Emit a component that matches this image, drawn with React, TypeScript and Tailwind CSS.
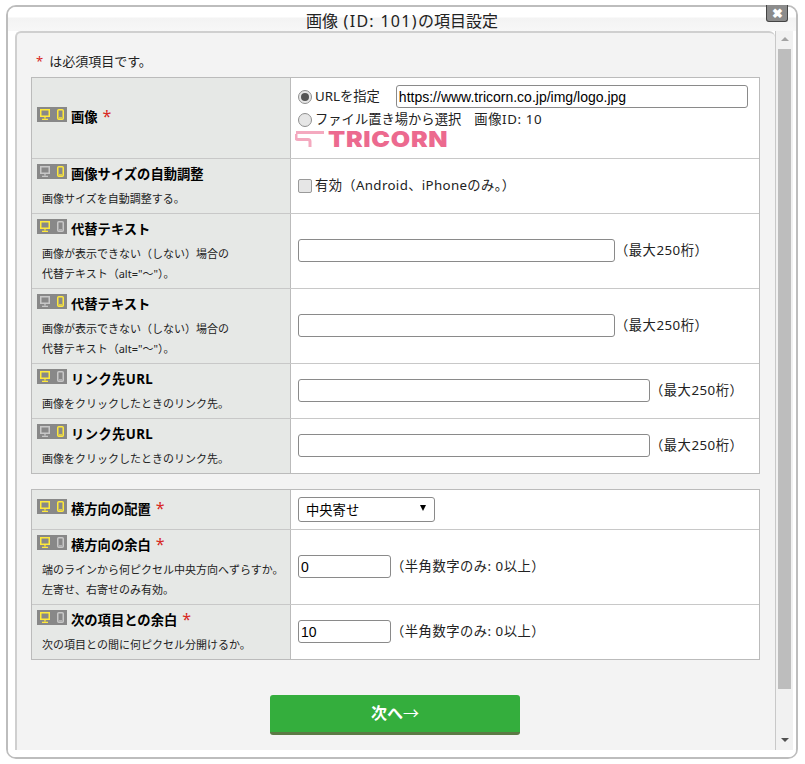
import type { ReactNode } from "react"

const font = "font-['Noto_Sans','Noto_Sans_CJK_JP',sans-serif]"

function Icons({ pc, sp }: { pc: boolean; sp: boolean }) {
  const a = pc ? "#ffe93b" : "#c8c8c8"
  const b = sp ? "#ffe93b" : "#c8c8c8"
  return (
    <span className="inline-flex h-[15px] w-[30px] shrink-0 items-center gap-[7px] bg-[#888888] pl-[3px]">
      <svg width="10" height="11" viewBox="0 0 10 11" fill="none">
        <rect x="0.75" y="0.75" width="8.5" height="6.5" stroke={a} strokeWidth="1.5" />
        <path d="M5 8v1.5M2 10.3h6" stroke={a} strokeWidth="1.3" />
      </svg>
      <svg width="7" height="11" viewBox="0 0 7 11" fill="none">
        <rect x="0.75" y="0.75" width="5.5" height="9.5" rx="1" stroke={b} strokeWidth="1.5" />
        <path d="M2 8.8h3" stroke={b} />
      </svg>
    </span>
  )
}

function Star() {
  return <span className="ml-[5px] text-[16px] leading-[16px] font-normal text-[#d8281e]">*</span>
}

function Row({
  pc, sp, title, req, desc, h, last, children,
}: {
  pc: boolean; sp: boolean; title: ReactNode; req?: boolean; desc?: string[]; h: string; last?: boolean; children: ReactNode
}) {
  return (
    <div className={`flex ${h} ${last ? "" : "border-b border-[#c8c8c8]"}`}>
      <div className={`flex w-[259px] shrink-0 flex-col border-r border-[#bbbbbb] bg-[#e6e8e6] pl-[5px] ${desc ? "justify-start pt-[5px]" : "justify-center pb-[2px]"}`}>
        <div className="flex items-start">
          <Icons pc={pc} sp={sp} />
          <span className="ml-1 mt-[1px] text-[13.3px] font-bold leading-[19px] text-black">
            {title}
            {req && <Star />}
          </span>
        </div>
        {desc && (
          <div className="mt-[5px] pl-[5px] text-[11px] leading-[20px] text-[#222222]">
            {desc.map(d => <div key={d}>{d}</div>)}
          </div>
        )}
      </div>
      <div className="flex min-w-0 flex-1 items-center bg-white pb-[1px] pl-[7px] text-[13.3px] text-[#222222]">{children}</div>
    </div>
  )
}

function TextBox({ w, value = "" }: { w: string; value?: string }) {
  return (
    <input
      readOnly
      value={value}
      className={`${w} h-[23px] rounded-[3px] border border-[#8a8a8a] bg-white px-[2px] font-['Liberation_Sans',sans-serif] text-[14px] text-black outline-none`}
    />
  )
}

function Note({ children }: { children: ReactNode }) {
  return <span className="text-[13.3px] tracking-[0.5px] text-[#222222]">{children}</span>
}

function Radio({ on }: { on?: boolean }) {
  return (
    <span className="flex h-[14px] w-[14px] shrink-0 items-center justify-center rounded-full border border-[#8f8f8f] bg-[#e6e6e6]">
      {on && <span className="h-[8px] w-[8px] rounded-full bg-[#555555]" />}
    </span>
  )
}

function Logo() {
  return (
    <div className="flex h-[17px] items-center">
      <svg width="30" height="17" viewBox="0 0 30 17" fill="none">
        <path d="M1 1.5h28" stroke="#f4a9bf" strokeWidth="3" />
        <path d="M1 3v3.5a2 2 0 0 0 2 2h10a2 2 0 0 1 2 2V16" stroke="#f4a9bf" strokeWidth="3" />
      </svg>
      <span className="ml-[3px] origin-left scale-x-[1.14] font-['Inter',sans-serif] text-[22px] leading-[17px] font-black tracking-[0.6px] text-[#ec6a8f]">
        TRICORN
      </span>
    </div>
  )
}

export default function App() {
  return (
    <div className={`h-[764px] w-[805px] overflow-hidden bg-white pl-[6px] pt-[5px] ${font}`}>
      <div className="relative flex h-[754px] w-[792px] flex-col rounded-[10px] border-2 border-[#bdbdbd] bg-white">
        <div className="h-[24px] shrink-0 rounded-t-[8px] bg-[linear-gradient(to_bottom,#ffffff_0,#ffffff_10px,#f3f3f3_11px,#f7f7f7_100%)] text-center text-[16px] leading-[29px] text-[#222222]">
          画像<span className="tracking-[1.3px]"> (ID: 101)</span>の項目設定
        </div>
        <div className="absolute right-[8px] top-[-2px] flex h-[17px] w-[22px] items-center justify-center rounded-b-[3px] border border-t-0 border-[#444444] bg-[#8c8c8c] text-[13px] leading-none font-bold text-white">
          ✖
        </div>

        <div className="flex min-h-0 flex-1 pl-[7px] pr-[3px]">
          <div className="flex-1 rounded-t-[6px] border-l-2 border-t-2 border-[#cfcfcf] bg-[#f3f3f3] pl-[14px]">
            <div className="h-[44px] pl-[5px] pt-[19px] text-[13px] leading-[18px] text-[#222222]">
              <span className="mr-[6px] text-[#d8281e]">*</span>は必須項目です。
            </div>

            <div className="w-[729px] border border-[#bbbbbb]">
              <Row pc sp title="画像" req h="h-[81px]">
                <div className="flex flex-col">
                  <div className="flex h-[23px] items-center">
                    <Radio on />
                    <span className="ml-[3px]">URLを指定</span>
                    <TextBox w="ml-[16px] w-[352px]" value="https://www.tricorn.co.jp/img/logo.jpg" />
                  </div>
                  <div className="flex h-[23px] items-center">
                    <Radio />
                    <span className="ml-[3px]">ファイル置き場から選択</span>
                    <span className="ml-[13px] tracking-[0.6px]">画像ID: 10</span>
                  </div>
                  <div className="-ml-[3px] mb-[2px]"><Logo /></div>
                </div>
              </Row>
              <Row pc={false} sp title="画像サイズの自動調整" desc={["画像サイズを自動調整する。"]} h="h-[55px]">
                <span className="flex h-[14px] w-[14px] shrink-0 rounded-[2px] border border-[#9a9a9a] bg-[#e6e6e6]" />
                <span className="ml-[3px] tracking-[0.35px]">有効（Android、iPhoneのみ。）</span>
              </Row>
              <Row pc sp={false} title="代替テキスト" desc={["画像が表示できない（しない）場合の", "代替テキスト（alt=\"～\"）。"]} h="h-[75px]">
                <TextBox w="w-[317px]" />
                <Note>（最大250桁）</Note>
              </Row>
              <Row pc={false} sp title="代替テキスト" desc={["画像が表示できない（しない）場合の", "代替テキスト（alt=\"～\"）。"]} h="h-[75px]">
                <TextBox w="w-[317px]" />
                <Note>（最大250桁）</Note>
              </Row>
              <Row pc sp={false} title={<span className="tracking-[0.4px]">リンク先URL</span>} desc={["画像をクリックしたときのリンク先。"]} h="h-[55px]">
                <TextBox w="w-[352px]" />
                <Note>（最大250桁）</Note>
              </Row>
              <Row pc={false} sp title={<span className="tracking-[0.4px]">リンク先URL</span>} desc={["画像をクリックしたときのリンク先。"]} h="h-[54px]" last>
                <TextBox w="w-[352px]" />
                <Note>（最大250桁）</Note>
              </Row>
            </div>

            <div className="mt-[15px] w-[729px] border border-[#bbbbbb]">
              <Row pc sp title="横方向の配置" req h="h-[40px]">
                <div className="relative flex h-[25px] w-[137px] items-center rounded-[3px] border border-[#8a8a8a] bg-white pl-[7px] pt-[3px] text-[13.3px] text-black">
                  中央寄せ
                  <span className="absolute right-[8px] top-[7px] h-0 w-0 border-x-[3.5px] border-t-[6px] border-x-transparent border-t-black" />
                </div>
              </Row>
              <Row pc sp={false} title="横方向の余白" req desc={["端のラインから何ピクセル中央方向へずらすか。", "左寄せ、右寄せのみ有効。"]} h="h-[75px]">
                <TextBox w="w-[93px]" value="0" />
                <Note>（半角数字のみ: 0以上）</Note>
              </Row>
              <Row pc sp={false} title="次の項目との余白" req desc={["次の項目との間に何ピクセル分開けるか。"]} h="h-[54px]" last>
                <TextBox w="w-[93px]" value="10" />
                <Note>（半角数字のみ: 0以上）</Note>
              </Row>
            </div>

            <button className="ml-[239px] mt-[35px] flex h-[40px] w-[250px] items-center justify-center rounded-[3px] border-b-[3px] border-[#5b7a45] bg-[#34ae3d] pb-[2px] text-[16px] font-bold text-white">
              次へ<span className="font-normal">→</span>
            </button>
          </div>

          <div className="flex w-[18px] shrink-0 flex-col items-center border-l border-[#c8c8c8] bg-[#f1f1f1] pb-[8px] pt-[6px]">
            <span className="h-0 w-0 border-x-[4px] border-b-[4px] border-x-transparent border-b-[#a3a3a3]" />
            <span className="mt-[8px] h-[640px] w-[13px] bg-[#bdbdbd]" />
            <span className="mt-auto h-0 w-0 border-x-[4px] border-t-[4px] border-x-transparent border-t-[#505050]" />
          </div>
        </div>
        <div className="h-[7px] shrink-0 rounded-b-[8px] bg-white" />
      </div>
    </div>
  )
}
